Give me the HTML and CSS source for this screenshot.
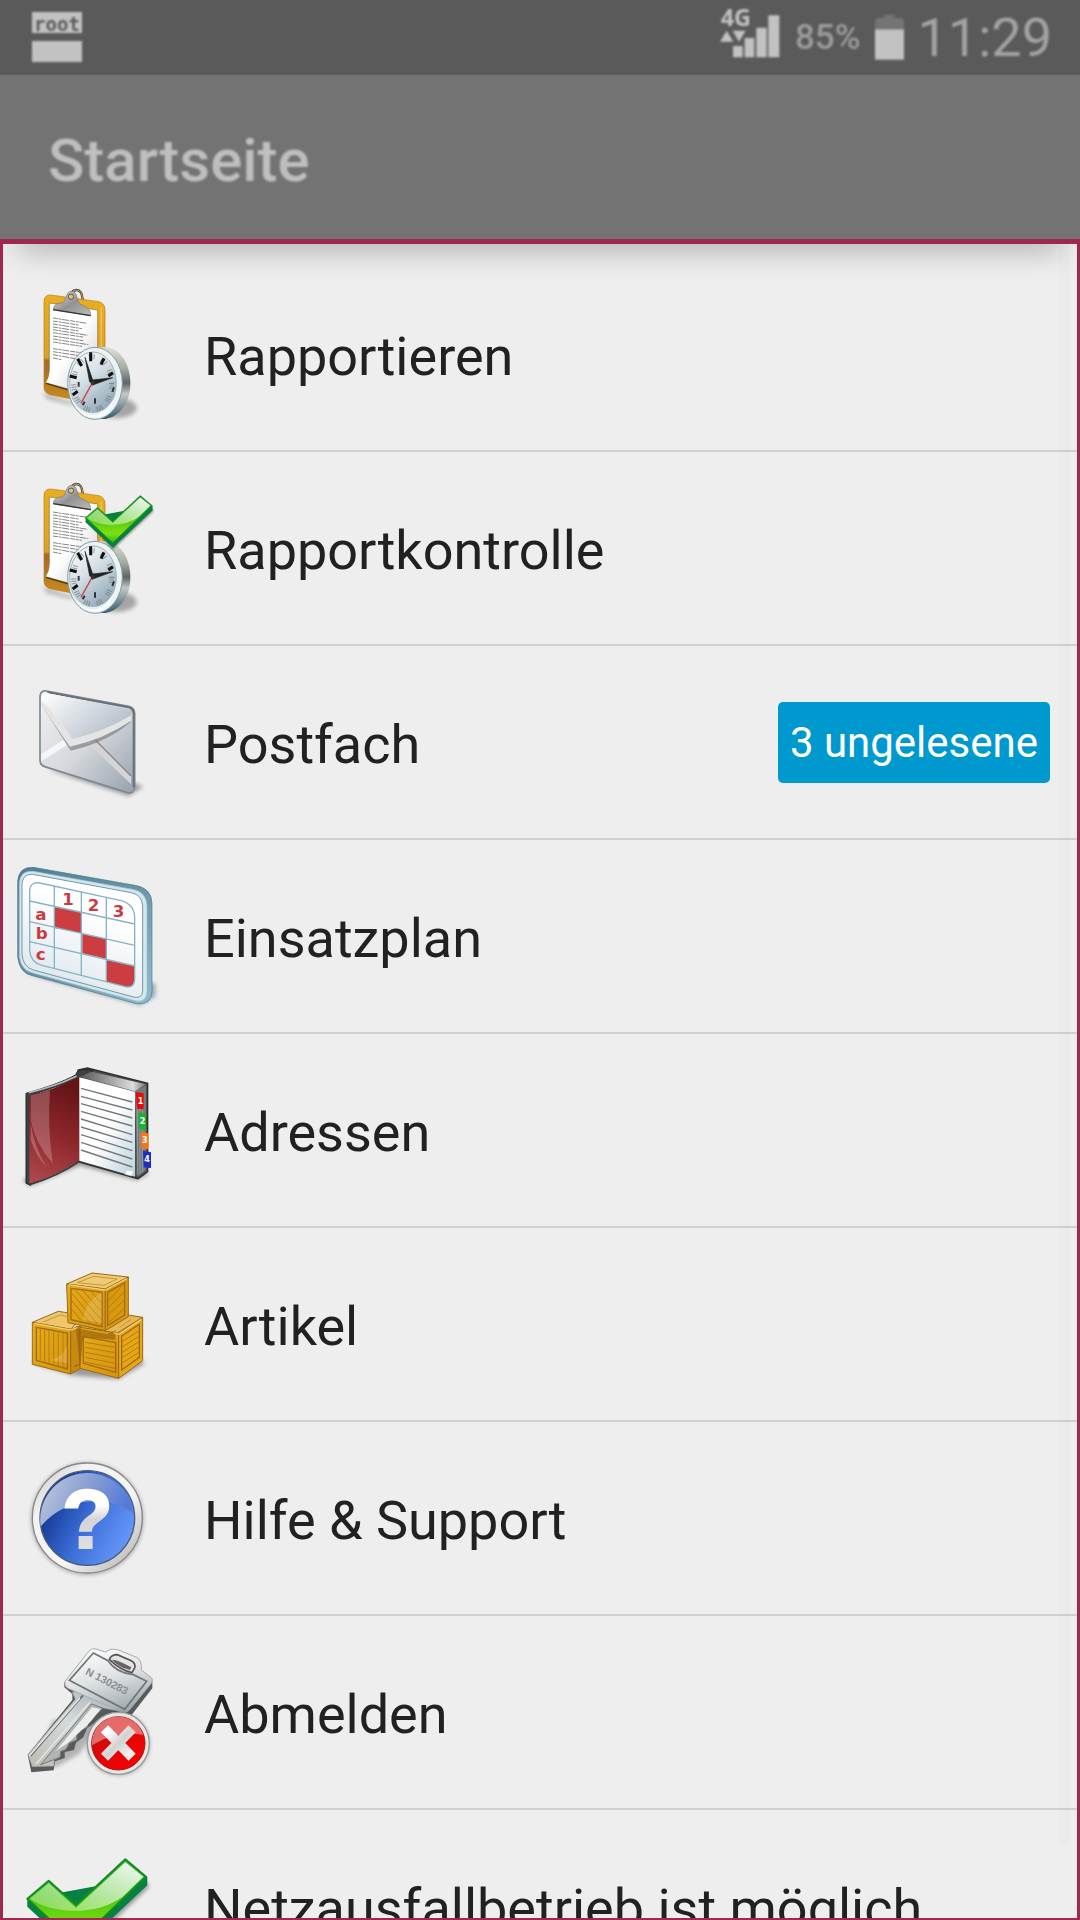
FILE: index.html
```html
<!DOCTYPE html>
<html lang="de">
  <head>
    <meta charset="UTF-8" />
    <meta name="viewport" content="width=device-width, initial-scale=1.0" />
    <title>Startseite</title>
    <link rel="stylesheet" href="styles.css">
  </head>
  <body>
    <!-- shared gradients and icon parts -->
    <svg class="defs" width="0" height="0" aria-hidden="true">
      <defs>
        <filter id="soft" x="-30%" y="-30%" width="160%" height="160%">
          <feGaussianBlur stdDeviation="7" />
        </filter>
        <linearGradient id="board" x1="0" y1="0" x2="0" y2="1">
          <stop offset="0" stop-color="#e9ae20" />
          <stop offset=".6" stop-color="#dda028" />
          <stop offset=".63" stop-color="#a4692a" />
          <stop offset="1" stop-color="#c98a1c" />
        </linearGradient>
        <linearGradient id="paper" x1="0" y1="0" x2="1" y2="1">
          <stop offset=".5" stop-color="#fff" />
          <stop offset="1" stop-color="#c9c9c9" />
        </linearGradient>
        <linearGradient id="steel" x1="0" y1="0" x2="1" y2="1">
          <stop offset="0" stop-color="#e4e4e4" />
          <stop offset=".5" stop-color="#929292" />
          <stop offset="1" stop-color="#bcbcbc" />
        </linearGradient>
        <linearGradient id="rim" x1="0" y1="0" x2="0" y2="1">
          <stop offset="0" stop-color="#dde0d8" />
          <stop offset=".3" stop-color="#a5aaa0" />
          <stop offset=".5" stop-color="#59666b" />
          <stop offset=".65" stop-color="#c3c9c5" />
          <stop offset="1" stop-color="#36586f" />
        </linearGradient>
        <linearGradient id="dial" x1="0" y1="0" x2=".6" y2="1">
          <stop offset="0" stop-color="#fff" />
          <stop offset=".45" stop-color="#d9e2e8" />
          <stop offset="1" stop-color="#93abba" />
        </linearGradient>
        <linearGradient id="green" x1="0" y1="0" x2="0" y2="1">
          <stop offset="0" stop-color="#2fae2f" />
          <stop offset=".45" stop-color="#4cc614" />
          <stop offset=".8" stop-color="#7ee00c" />
          <stop offset="1" stop-color="#2fb71c" />
        </linearGradient>
        <linearGradient id="gloss" x1="0" y1="1" x2="1" y2="0">
          <stop offset="0" stop-color="#fff" stop-opacity=".25" />
          <stop offset="1" stop-color="#fff" stop-opacity=".95" />
        </linearGradient>

        <g id="clipboard">
          <path d="M128 365L215 395L300 350V380L210 402L140 384Z" fill="#000" opacity=".25" filter="url(#soft)" />
          <path d="M208 84C210 60 232 50 243 66C250 78 244 92 256 100" fill="none" stroke="#3c3c3c" stroke-width="7" />
          <path d="M209 83C211 60 232 50 243 66C250 78 244 92 256 100" fill="none" stroke="#dcae55" stroke-width="3" />
          <path d="M132 93Q132 72 153 73L297 93Q315 98 315 118V330L220 386L150 372Q132 366 132 350Z" fill="url(#board)" stroke="#b87a18" stroke-width="2" />
          <path d="M304 110V300" stroke="#f5cf6c" stroke-width="5" opacity=".6" />
          <path d="M148 97L293 118V340L212 357L136 336Q148 320 148 296Z" fill="url(#paper)" stroke="#8d7133" stroke-width="2" />
          <path d="M138 338L212 360" stroke="#443a20" stroke-width="4" />
          <g stroke="#444" stroke-width="3" stroke-dasharray="15 2 9 2 21 3" opacity=".65">
            <path d="M159 142L261 158M159 151L236 163M159 160L246 174M159 169L236 181M159 177L263 194M159 186L249 199" />
            <path d="M159 196L250 210M159 205L265 222M159 214L246 227M159 234L249 247M159 243L244 256M159 252L226 264M159 262L184 267" />
          </g>
          <path d="M160 118C160 100 175 97 186 97C200 92 196 62 214 62C235 62 228 92 242 101C262 109 272 116 272 135Z" fill="url(#steel)" stroke="#777" stroke-width="2" />
          <path d="M160 117L272 135" stroke="#333" stroke-width="4" />
          <circle cx="213" cy="78" r="8" fill="#e5c477" stroke="#555" stroke-width="3" />
        </g>

        <g id="clock">
          <ellipse cx="348" cy="412" rx="62" ry="30" fill="#000" opacity=".3" filter="url(#soft)" />
          <path d="M280 230H318C362 234 391 282 391 338C391 396 360 438 316 445H280Z" fill="url(#rim)" />
          <ellipse cx="285" cy="338" rx="82" ry="108" fill="#edf3f3" stroke="#839ba5" stroke-width="3" />
          <ellipse cx="279" cy="338" rx="70" ry="94" fill="url(#dial)" stroke="#9eb2bc" stroke-width="3" />
          <path d="M218 384C237 432 304 449 340 385C330 460 240 461 218 384" fill="#f8fcfc" opacity=".8" />
          <ellipse cx="278" cy="338" rx="57" ry="80" fill="none" stroke="#777" stroke-width="15" stroke-dasharray="3 4 3 4 3 22" opacity=".75" />
          <g stroke="#111" stroke-width="9">
            <path d="M272 245V272M312 263L303 282M339 306L325 316M233 264L245 286M209 316L230 321M218 373L233 362" />
            <path d="M342 350L337 364M285 383V399M254 393L248 404M236 334V348" stroke-width="6" opacity=".8" />
          </g>
          <path d="M276 338L243 398" stroke="#c8434d" stroke-width="4" />
          <path d="M282 340L255 260L269 334ZM276 344L338 321L277 328Z" fill="#222" stroke="#222" stroke-width="2" />
          <circle cx="278" cy="337" r="6" fill="#333" />
        </g>

        <g id="check">
          <path d="M92 375L228 505L442 305L446 322L228 528Z" fill="#000" opacity=".4" filter="url(#soft)" />
          <path d="M82 356V380L228 516L442 316V290Z" fill="#078141" />
          <path d="M82 356L146 302L228 376L376 238L438 290L228 492Z" fill="url(#green)" stroke="#158a28" stroke-width="6" stroke-linejoin="round" />
          <path d="M90 356L146 309L228 384L376 246L430 290L368 350C290 407 160 404 90 356Z" fill="url(#gloss)" />
        </g>
      </defs>
    </svg>

    <header class="header">
      <div class="status-bar">
        <div class="root-badge"><span>root</span><i></i></div>
        <div class="status-right">
          <svg class="signal" viewBox="120 0 186 225" aria-label="4G">
            <text x="122" y="79">4G</text>
            <path d="M120 125L140 92L160 125ZM158 92H197L177 125ZM159 138H188V172H159ZM194 114H223V172H194ZM229 83H260V172H229ZM265 46H298V172H265Z" />
          </svg>
          <span class="percent">85%</span>
          <svg class="battery" viewBox="582 0 93 225" aria-hidden="true">
            <path d="M585 88V60L592 54H612V44H644V54H665L672 60V88Z" fill="#747474" />
            <path d="M585 88H672V179H585Z" />
          </svg>
          <time class="time">11:29</time>
        </div>
      </div>
      <h1 class="title">Startseite</h1>
    </header>

    <nav class="menu">
      <ul class="menu-list">
        <li>
          <a class="item" href="#rapportieren">
            <svg class="icon" viewBox="45 34 432 432" aria-hidden="true">
              <use href="#clipboard" />
              <use href="#clock" />
            </svg>
            <span class="label">Rapportieren</span>
          </a>
        </li>
        <li>
          <a class="item" href="#rapportkontrolle">
            <svg class="icon" viewBox="45 34 432 432" aria-hidden="true">
              <use href="#clipboard" />
              <use href="#clock" />
              <use href="#check" transform="translate(211 -39) scale(.558)" />
            </svg>
            <span class="label">Rapportkontrolle</span>
          </a>
        </li>
        <li>
          <a class="item" href="#postfach">
            <svg class="icon" viewBox="45 30 432 432" aria-hidden="true">
              <defs>
                <linearGradient id="mail" x1="0" y1="0" x2="1" y2="1">
                  <stop offset="0" stop-color="#f0f2f3" />
                  <stop offset=".5" stop-color="#d6d9dd" />
                  <stop offset="1" stop-color="#96a0ab" />
                </linearGradient>
                <linearGradient id="flap" x1="0" y1="0" x2="1" y2=".6">
                  <stop offset="0" stop-color="#fff" />
                  <stop offset=".5" stop-color="#d9dfe5" />
                  <stop offset="1" stop-color="#b6bec8" />
                </linearGradient>
              </defs>
              <path d="M135 326L385 408L430 380L400 368Z" fill="#000" opacity=".35" filter="url(#soft)" />
              <path d="M120 108Q122 90 140 93L386 139Q404 143 404 160V380Q402 404 382 398L134 320Q120 316 120 300Z" fill="url(#mail)" stroke="#7d8a92" stroke-width="5" />
              <path d="M142 97L386 142Q400 146 401 162V382" fill="none" stroke="#66737c" stroke-width="6" />
              <path d="M124 282L190 240L202 254L124 304Z" fill="#f6f6f6" />
              <path d="M264 250L288 240L393 346V372Z" fill="#d5d5d5" />
              <path d="M286 240L393 348" stroke="#7f868c" stroke-width="4" />
              <path d="M124 134L212 272Q320 248 392 186V176L212 250Z" fill="#6f7578" opacity=".6" />
              <path d="M124 112Q125 98 142 100L384 147Q394 150 394 160V182Q310 238 210 260Q160 190 124 134Z" fill="#e4e4e3" />
              <path d="M124 112Q125 98 142 100L384 147Q394 150 394 160V166Q310 216 216 237Q170 160 124 124Z" fill="url(#flap)" />
            </svg>
            <span class="label">Postfach</span>
            <span class="badge">3 ungelesene</span>
          </a>
        </li>
        <li>
          <a class="item" href="#einsatzplan">
            <svg class="icon" viewBox="45 42 432 432" aria-hidden="true">
              <defs>
                <linearGradient id="frame" x1="0" y1="0" x2="1" y2="1">
                  <stop offset="0" stop-color="#4d7f97" />
                  <stop offset=".5" stop-color="#6793a7" />
                  <stop offset="1" stop-color="#8fbccd" />
                </linearGradient>
                <linearGradient id="sheet" x1=".6" y1=".3" x2=".3" y2="1">
                  <stop offset="0" stop-color="#fff" />
                  <stop offset="1" stop-color="#dbe5ea" />
                </linearGradient>
              </defs>
              <path d="M75 370L420 466L466 440V400Z" fill="#3c6478" opacity=".5" filter="url(#soft)" />
              <path d="M53 92Q57 50 100 52L405 106Q455 114 456 160V425Q454 466 410 461L98 377Q58 370 53 320Z" fill="url(#frame)" stroke="#55798a" stroke-width="2" />
              <path d="M58 98Q62 60 100 64L398 118Q438 126 441 165V425Q440 458 408 453L98 369Q62 360 58 318Z" fill="#d5e6ed" stroke="#9fbdca" stroke-width="2" />
              <path d="M66 100Q70 70 98 73L394 128Q426 134 428 168V424Q426 445 404 442L100 360Q68 350 66 312Z" fill="url(#sheet)" stroke="#7397a8" stroke-width="3" />
              <path d="M163 171L243 187V249L163 234ZM247 252L318 267V326L247 310ZM320 330L403 348V390Q402 414 380 411L320 396Z" fill="#cb3d40" />
              <path d="M89 124Q90 94 120 99L360 151Q400 160 404 198V385Q404 416 376 410L126 346Q92 338 89 302ZM163 107V354M244 126V374M319 144V395M89 153L404 222M89 215L404 286M89 275L404 348" fill="none" stroke="#86b3c6" stroke-width="4" />
              <g class="grid-text">
                <text x="187" y="166">1</text>
                <text x="263" y="184">2</text>
                <text x="338" y="201">3</text>
                <text x="106" y="210">a</text>
                <text x="107" y="268">b</text>
                <text x="107" y="329">c</text>
              </g>
            </svg>
            <span class="label">Einsatzplan</span>
          </a>
        </li>
        <li>
          <a class="item" href="#adressen">
            <svg class="icon" viewBox="45 54 432 432" aria-hidden="true">
              <defs>
                <linearGradient id="cover" x1=".4" y1="0" x2=".2" y2="1">
                  <stop offset="0" stop-color="#651317" />
                  <stop offset=".5" stop-color="#8d272c" />
                  <stop offset="1" stop-color="#ad484c" />
                </linearGradient>
                <linearGradient id="page" x1="0" y1="0" x2="1" y2="1">
                  <stop offset=".5" stop-color="#fff" />
                  <stop offset="1" stop-color="#b9d2dd" />
                </linearGradient>
                <linearGradient id="top" x1="0" y1="0" x2="1" y2="0">
                  <stop offset="0" stop-color="#555" />
                  <stop offset=".8" stop-color="#ddd" />
                  <stop offset="1" stop-color="#777" />
                </linearGradient>
              </defs>
              <path d="M68 420L90 438L240 376L410 420L448 400L240 345Z" fill="#000" opacity=".4" filter="url(#soft)" />
              <path d="M234 108V90L262 84L443 130V395L414 416L238 366Z" fill="#4b4f50" stroke="#2b2f30" stroke-width="4" />
              <path d="M78 160C140 142 188 126 228 104C230 88 248 86 280 92L262 104L238 116L92 166V436L78 430Z" fill="#3c4042" stroke="#24282a" stroke-width="3" />
              <path d="M86 158Q170 138 230 108" fill="none" stroke="#b2b5b5" stroke-width="5" />
              <path d="M240 110L274 95L438 133L405 154Z" fill="url(#top)" />
              <path d="M405 154L438 136V390L413 410Z" fill="#74797b" />
              <path d="M412 160V405M420 160V400M428 160V396" stroke="#aab0b2" stroke-width="2" />
              <path d="M88 166Q166 148 238 110V362Q175 405 88 432Z" fill="url(#cover)" />
              <path d="M92 166Q122 160 150 150Q142 260 158 370Q105 310 92 240ZM92 250Q105 330 140 380Q108 350 92 300Z" fill="#fff" opacity=".22" />
              <path d="M88 434Q175 408 238 364L410 412" fill="none" stroke="#32383a" stroke-width="5" />
              <path d="M238 112L405 155V410L238 362Z" fill="url(#page)" />
              <path d="M243 145L397 186M243 169L397 210M243 191L397 234M243 214L397 258M243 237L397 284M243 261L397 307M243 284L397 332M243 307L397 357M243 330L397 381" stroke="#777" stroke-width="4" />
              <path d="M374 403L380 390L402 394L394 408Z" fill="#fff" stroke="#9aa" stroke-width="1" />
              <path d="M407 156L431 160V208L411 206Z" fill="#ec0808" />
              <path d="M417 217L437 221V270L417 267Z" fill="#0bbd22" />
              <path d="M422 276L445 280V328L424 326Z" fill="#f4761a" />
              <path d="M429 332L453 337V384L431 382Z" fill="#1c2cc9" />
              <g class="tab-text">
                <text x="413" y="192">1</text>
                <text x="419" y="252">2</text>
                <text x="426" y="310">3</text>
                <text x="433" y="367">4</text>
              </g>
            </svg>
            <span class="label">Adressen</span>
          </a>
        </li>
        <li>
          <a class="item" href="#artikel">
            <svg class="icon" viewBox="45 36 432 432" aria-hidden="true">
              <defs>
                <linearGradient id="wood" x1="0" y1="0" x2="1" y2="1">
                  <stop offset="0" stop-color="#e8ac1a" />
                  <stop offset="1" stop-color="#d5940c" />
                </linearGradient>
              </defs>
              <path d="M98 370L215 406L355 418L436 370L390 340H120Z" fill="#000" opacity=".35" filter="url(#soft)" />
              <g stroke="#9a6a1a" stroke-width="3" stroke-linejoin="round">
                <path d="M225 262L350 280L428 232L385 225Z" fill="#e6b955" />
                <path d="M228 260L356 280V415L228 382Z" fill="url(#wood)" />
                <path d="M356 280L428 232V362L356 415Z" fill="#e6a717" />
                <path d="M97 247L175 214L245 225L214 268Z" fill="#eec76a" />
                <path d="M97 247L212 268V402L97 373Z" fill="url(#wood)" />
                <path d="M212 268L240 258V386L212 402Z" fill="#c78a10" />
                <path d="M200 132L276 99L385 111L316 147Z" fill="#efcc74" />
                <path d="M200 132L316 147V272L204 248Z" fill="url(#wood)" />
                <path d="M316 147L385 111V230L316 272Z" fill="#d8990f" />
              </g>
              <path d="M228 264L322 282L346 270V300L250 292L240 386Z" fill="#8e590c" opacity=".6" />
              <g fill="none" stroke="#a06a10" stroke-width="4">
                <path d="M213 145L306 157V260L213 239ZM323 157L374 128V225L323 257Z" />
                <path d="M109 262L202 279V387L109 361ZM250 290L347 308V397L250 370ZM365 288L418 253V352L365 390Z" />
                <path d="M223 380L240 372" />
              </g>
              <g fill="none" stroke="#b57c14" stroke-width="3">
                <path d="M213 157L295 255M213 179L270 249M213 205L244 242M225 149L306 242M248 151L306 216M272 154L306 190" />
                <path d="M324 184L368 135M324 204L374 154M324 225L374 180M326 248L374 204" />
                <path d="M121 266V360M134 268V364M147 270V368M161 273V373M175 276V377M189 278V380" />
                <path d="M255 307L345 322M255 322L345 338M255 337L345 354M255 352L345 370M255 366L345 385" />
                <path d="M367 305L417 272M367 321L417 289M367 337L417 305M367 353L417 321M367 369L417 337" />
                <path d="M232 128L282 109L352 117L312 136ZM130 246L180 225L202 230M358 262L394 238" stroke="#c6963c" />
              </g>
              <path d="M250 239Q255 185 306 158V250ZM150 360Q195 350 202 310V370Z" fill="#fff" opacity=".17" />
              <path d="M104 250L212 270L232 263M206 134L316 150L380 116M340 278L356 283L424 238" fill="none" stroke="#ffe9a8" stroke-width="4" opacity=".7" />
            </svg>
            <span class="label">Artikel</span>
          </a>
        </li>
        <li>
          <a class="item" href="#hilfe">
            <svg class="icon" viewBox="45 48 432 432" aria-hidden="true">
              <defs>
                <linearGradient id="ring" x1="0" y1="0" x2="1" y2="1">
                  <stop offset="0" stop-color="#bdbdbd" />
                  <stop offset=".25" stop-color="#f2f2f2" />
                  <stop offset=".6" stop-color="#f5f5f5" />
                  <stop offset="1" stop-color="#a9a9a9" />
                </linearGradient>
                <linearGradient id="blue" x1="0" y1=".3" x2="1" y2=".8">
                  <stop offset="0" stop-color="#0a2d86" />
                  <stop offset=".5" stop-color="#3c6fd8" />
                  <stop offset="1" stop-color="#6c9dff" />
                </linearGradient>
                <linearGradient id="shine" x1="0" y1="0" x2="1" y2=".3">
                  <stop offset="0" stop-color="#c6cddd" />
                  <stop offset=".5" stop-color="#8ca2d4" />
                  <stop offset="1" stop-color="#557bd8" />
                </linearGradient>
                <linearGradient id="mark" x1="0" y1="0" x2="0" y2="1">
                  <stop offset=".35" stop-color="#fff" />
                  <stop offset=".5" stop-color="#d4d4d8" />
                  <stop offset="1" stop-color="#e6e6e6" />
                </linearGradient>
              </defs>
              <circle cx="262" cy="266" r="168" fill="#000" opacity=".3" filter="url(#soft)" />
              <circle cx="262" cy="264" r="165" fill="url(#ring)" stroke="#888" stroke-width="4" />
              <circle cx="262" cy="264" r="142" fill="url(#blue)" stroke="#4c5a78" stroke-width="4" />
              <path d="M122 290A140 140 0 0 1 401 250C345 205 210 185 122 290Z" fill="url(#shine)" />
              <text class="question" x="262" y="355" fill="url(#mark)" stroke="url(#mark)">?</text>
            </svg>
            <span class="label">Hilfe &amp; Support</span>
          </a>
        </li>
        <li>
          <a class="item" href="#abmelden">
            <svg class="icon" viewBox="45 60 432 432" aria-hidden="true">
              <defs>
                <linearGradient id="key" x1=".3" y1="0" x2=".7" y2="1">
                  <stop offset="0" stop-color="#fbfbfb" />
                  <stop offset=".45" stop-color="#dfe3e5" />
                  <stop offset="1" stop-color="#9da6aa" />
                </linearGradient>
                <linearGradient id="blade" x1="1" y1="0" x2="0" y2="1">
                  <stop offset="0" stop-color="#9eabb2" />
                  <stop offset=".5" stop-color="#d5d9d9" />
                  <stop offset="1" stop-color="#bcbcb1" />
                </linearGradient>
                <linearGradient id="red" x1="0" y1="0" x2="1" y2="1">
                  <stop offset="0" stop-color="#c40c0c" />
                  <stop offset="1" stop-color="#ff0000" />
                </linearGradient>
                <linearGradient id="cross" x1="0" y1="0" x2="1" y2="1">
                  <stop offset="0" stop-color="#fff" />
                  <stop offset=".5" stop-color="#d2d2d2" />
                  <stop offset="1" stop-color="#f0f0f0" />
                </linearGradient>
              </defs>
              <path d="M100 440L160 300L300 300L240 400L170 440Z" fill="#000" opacity=".25" filter="url(#soft)" />
              <path d="M193 186V202L217 222V240L83 404L94 457L161 451L165 424L194 414V396L222 390L228 368L250 352L262 324L300 296H386L457 205V186Z" fill="#585b5c" />
              <path d="M217 216L252 212L388 264L370 276L300 262L276 300L262 310V322L244 328L230 344V360L208 368L198 388L182 394L180 412L162 420V438L97 440L84 404L226 238Z" fill="url(#blade)" stroke="#9a9fa1" stroke-width="2" />
              <path d="M122 434L274 252L308 264L276 298L262 310V322L244 328L230 344V360L208 368L198 388L182 394L180 412Z" fill="#b2b4b4" stroke="#777" stroke-width="3" />
              <path d="M168 392L276 262L302 268L262 316L230 344L208 366Z" fill="#eceded" />
              <path d="M256 218L92 408" stroke="#626a6e" stroke-width="5" />
              <path d="M240 234L88 408M270 246L108 432" stroke="#e4e7e8" stroke-width="4" />
              <path d="M195 184L268 92Q276 83 288 87L316 96Q330 84 350 88L410 112Q426 120 424 150L448 168Q462 176 454 190L388 270Q378 282 360 274L206 206Q192 200 195 184Z" fill="url(#key)" stroke="#aaa" stroke-width="3" />
              <path d="M328 118Q334 104 352 104L394 122Q408 130 404 144L396 158Q360 150 328 118Z" fill="#e4e4e4" stroke="#555" stroke-width="5" />
              <path d="M336 119Q352 118 394 142L390 150Q355 142 336 119Z" fill="#646464" />
              <path d="M280 99L324 122Q348 158 400 164L440 184L374 268L208 181Z" fill="none" stroke="#707678" stroke-width="5" />
              <text class="key-text" x="254" y="162" transform="rotate(27 254 162)">N 130283</text>
              <circle cx="355" cy="372" r="94" fill="#000" opacity=".3" filter="url(#soft)" />
              <circle cx="355" cy="370" r="93" fill="#e7e7e7" stroke="#999" stroke-width="4" />
              <circle cx="355" cy="370" r="80" fill="url(#red)" stroke="#a11" stroke-width="3" />
              <path d="M276 376A79 79 0 0 1 430 345Q350 330 276 376Z" fill="#fff" opacity=".4" />
              <path d="M324 337L386 401M386 337L324 401" stroke="url(#cross)" stroke-width="30" stroke-linecap="square" />
            </svg>
            <span class="label">Abmelden</span>
          </a>
        </li>
        <li>
          <a class="item" href="#netzausfall">
            <svg class="icon" viewBox="45 162 432 432" aria-hidden="true">
              <use href="#check" />
            </svg>
            <span class="label">Netzausfallbetrieb ist möglich</span>
          </a>
        </li>
      </ul>
    </nav>
  </body>
</html>
```
FILE: styles.css
```css
* {
  box-sizing: border-box;
}
body {
  margin: 0;
  height: 100vh;
  display: flex;
  flex-direction: column;
  overflow: hidden;
  font-family: Roboto, "Liberation Sans", sans-serif;
  background-color: #737373;
}
.defs {
  position: absolute;
}
.header {
  flex: none;
  color: #bfbfbf;
}
.status-bar {
  display: flex;
  justify-content: space-between;
  height: 75px;
  padding: 0 28px 0 32px;
  background-color: #5a5a5a;
  line-height: 75px;
}
.root-badge,
.status-right,
.title {
  filter: blur(1px);
}
.root-badge {
  display: flex;
  flex-direction: column;
  gap: 8px;
  width: 50px;
  padding-top: 12px;
}
.root-badge span,
.root-badge i {
  height: 21px;
  background-color: #c2c2c2;
}
.root-badge span {
  color: #5a5a5a;
  font: bold 19px/25px "DejaVu Sans Mono", monospace;
  text-align: center;
}
.status-right {
  display: flex;
  gap: 13px;
}
.signal {
  width: 62px;
  height: 75px;
  fill: #c2c2c2;
}
.signal text {
  font: bold 70px "Open Sans", sans-serif;
}
.battery {
  width: 31px;
  height: 75px;
  fill: #c2c2c2;
}
.percent {
  color: #9c9c9c;
  font-size: 35px;
  font-weight: 500;
}
.time {
  color: #a3a3a3;
  font-size: 54px;
}
.title {
  margin: 0;
  padding: 8px 48px 0;
  font-size: 60px;
  font-weight: 500;
  line-height: 156px;
}
.menu {
  position: relative;
  flex: 1;
  min-height: 0;
  border: 3px solid #a02850;
  border-top-width: 5px;
  border-bottom-width: 2px;
  background-color: #eee;
  overflow: hidden;
}
/* shadow of the title bar */
.menu::before {
  content: "";
  position: absolute;
  top: -20px;
  left: 16px;
  right: 16px;
  height: 20px;
  box-shadow: 0 4px 30px rgba(0, 0, 0, 0.34);
}
/* scroll track */
.menu::after {
  content: "";
  position: absolute;
  top: 0;
  bottom: 74px;
  right: 7px;
  width: 11px;
  background-color: rgba(0, 0, 0, 0.01);
}
.menu-list {
  height: 100%;
  margin: 0;
  padding: 14px 0 0;
  list-style: none;
  overflow-y: auto;
  scrollbar-width: none;
}
.item {
  display: flex;
  align-items: center;
  gap: 45px;
  height: 194px;
  padding: 0 27px 0 12px;
  border-bottom: 2px solid #d0d0d0;
  color: #212121;
  text-decoration: none;
}
.icon {
  flex: none;
  width: 144px;
  height: 144px;
  overflow: visible;
}
.label {
  flex: 1;
  padding-top: 6px;
  font-size: 54px;
  line-height: 64px;
  white-space: nowrap;
}
.badge {
  padding: 16px 12px;
  border-radius: 5px;
  background-color: #0099cf;
  color: #fff;
  font-size: 42px;
  line-height: 49px;
}
.grid-text {
  fill: #cb3d40;
  font: bold 50px "DejaVu Sans", sans-serif;
}
.tab-text {
  fill: #fff;
  font: bold 24px "DejaVu Sans", sans-serif;
}
.question {
  font: bold 252px "Liberation Sans", sans-serif;
  stroke-width: 6px;
  text-anchor: middle;
}
.key-text {
  fill: #8b8f91;
  font: bold 32px "Liberation Sans", sans-serif;
}
```
